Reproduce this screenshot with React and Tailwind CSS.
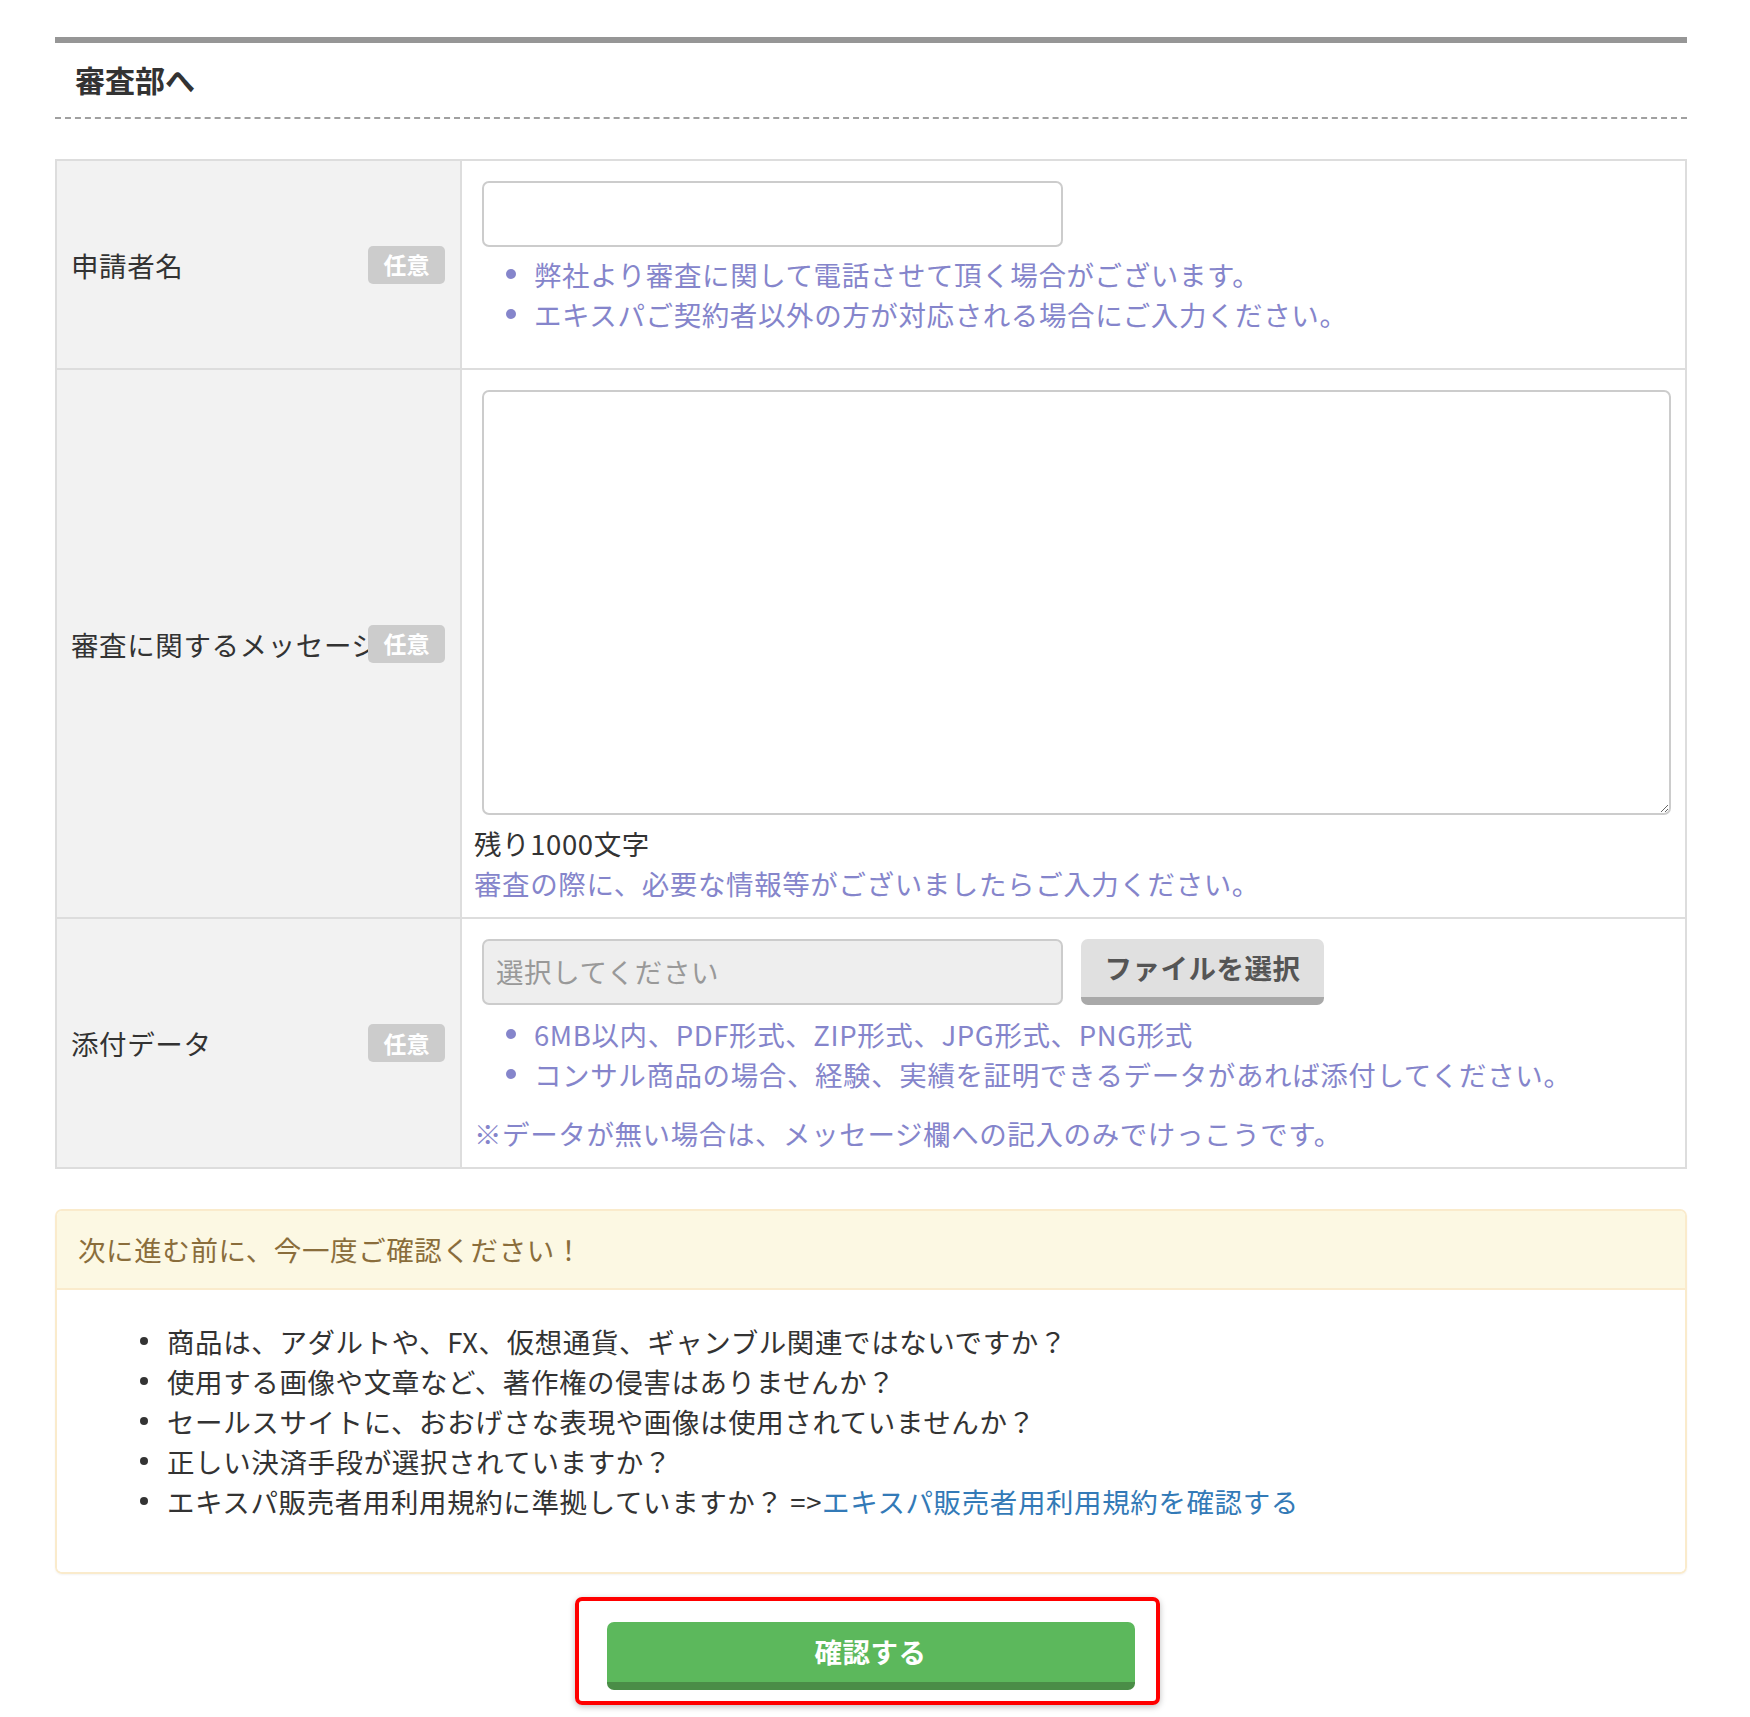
import React from 'react';

const font = "font-['Noto_Sans_CJK_JP','Noto_Sans',sans-serif]";

const Badge = () => (
  <span className="shrink-0 flex items-center justify-center w-[77px] h-[38px] rounded-[5px] bg-[#cccccc] text-white font-bold text-[23px] leading-none">
    任意
  </span>
);

const Label = ({ children }) => (
  <div className="w-[405px] shrink-0 bg-[#f2f2f2] border-r-2 border-[#dddddd] flex items-center pl-[14px] pr-[15px]">
    <span className="flex-1 min-w-0 overflow-hidden whitespace-nowrap text-[27.5px] tracking-[0.6px] leading-[40px] text-[#333333]">
      {children}
    </span>
    <Badge />
  </div>
);

// purple note bullets
const Notes = ({ items, className = '' }) => (
  <ul className={`pl-[32px] ${className}`}>
    {items.map((t) => (
      <li key={t} className="flex items-center gap-[18px] text-[27.5px] tracking-[0.6px] leading-[40px] text-[#8585cb] whitespace-nowrap">
        <span className="w-[10px] h-[10px] rounded-full bg-[#8585cb] shrink-0" />
        {t}
      </li>
    ))}
  </ul>
);

const checks = [
  '商品は、アダルトや、FX、仮想通貨、ギャンブル関連ではないですか？',
  '使用する画像や文章など、著作権の侵害はありませんか？',
  'セールスサイトに、おおげさな表現や画像は使用されていませんか？',
  '正しい決済手段が選択されていますか？',
];

export default function App() {
  return (
    <div className={`${font} bg-white min-h-[1717px] pt-[37px] pl-[55px]`}>
      <div className="w-[1632px]">
        {/* Section heading */}
        <div className="h-[6px] bg-[#969696]" />
        <div className="pl-[20px] pt-[16px] pb-[18px] border-b-2 border-dashed border-[#a0a0a0]">
          <h2 className="text-[30px] leading-[40px] font-bold text-[#333333]">審査部へ</h2>
        </div>

        {/* Form table */}
        <div className="mt-[40px] border-2 border-[#dddddd]">
          {/* Row 1 */}
          <div className="flex">
            <Label>申請者名</Label>
            <div className="flex-1 pl-[12px] pr-[14px] pt-[20px] pb-[14px]">
              <input
                type="text"
                className="ml-[8px] block w-[581px] h-[66px] border-2 border-[#cccccc] rounded-[7px] bg-white outline-none"
              />
              <Notes
                className="mt-[7px] mb-[20px]"
                items={[
                  '弊社より審査に関して電話させて頂く場合がございます。',
                  'エキスパご契約者以外の方が対応される場合にご入力ください。',
                ]}
              />
            </div>
          </div>

          {/* Row 2 */}
          <div className="flex border-t-2 border-[#dddddd]">
            <Label>審査に関するメッセージ</Label>
            <div className="flex-1 pl-[12px] pr-[14px] pt-[20px] pb-[14px]">
              <div className="pl-[8px]">
                <textarea className="block w-full h-[425px] border-2 border-[#cccccc] rounded-[7px] bg-white outline-none" />
              </div>
              <p className="mt-[8px] text-[27.5px] tracking-[0.6px] leading-[40px] text-[#333333]">残り1000文字</p>
              <p className="text-[27.5px] tracking-[0.6px] leading-[40px] text-[#8585cb]">
                審査の際に、必要な情報等がございましたらご入力ください。
              </p>
            </div>
          </div>

          {/* Row 3 */}
          <div className="flex border-t-2 border-[#dddddd]">
            <Label>添付データ</Label>
            <div className="flex-1 pl-[12px] pr-[14px] pt-[20px] pb-[14px]">
              <div className="ml-[8px] flex items-start gap-[18px]">
                <div className="w-[581px] h-[66px] border-2 border-[#cccccc] rounded-[7px] bg-[#eeeeee] flex items-center pl-[12px] text-[27.5px] tracking-[0.6px] text-[#999999]">
                  選択してください
                </div>
                <button className="w-[243px] h-[66px] rounded-[7px] bg-[#e0e0e0] border-b-8 border-[#a9a9a9] flex items-center justify-center text-[27.5px] tracking-[0.5px] font-bold text-[#555555]">
                  ファイルを選択
                </button>
              </div>
              <Notes
                className="mt-[9px]"
                items={[
                  '6MB以内、PDF形式、ZIP形式、JPG形式、PNG形式',
                  'コンサル商品の場合、経験、実績を証明できるデータがあれば添付してください。',
                ]}
              />
              <p className="mt-[19px] text-[27.5px] tracking-[0.6px] leading-[40px] text-[#8585cb]">
                ※データが無い場合は、メッセージ欄への記入のみでけっこうです。
              </p>
            </div>
          </div>
        </div>

        {/* Check panel */}
        <div className="mt-[40px] border-2 border-[#faebcc] rounded-[7px] overflow-hidden shadow-[0_1px_2px_rgba(0,0,0,0.05)]">
          <div className="bg-[#fcf8e3] border-b-2 border-[#faebcc] pl-[21px] pt-[18px] pb-[19px] text-[27.5px] tracking-[0.6px] leading-[40px] text-[#8a6d3b]">
            次に進む前に、今一度ご確認ください！
          </div>
          <ul className="bg-white pl-[83px] pt-[31px] pb-[51px] text-[27.5px] tracking-[0.6px] leading-[40px] text-[#333333]">
            {checks.map((t) => (
              <li key={t} className="flex items-center gap-[19px] whitespace-nowrap">
                <span className="w-[8px] h-[8px] rounded-full bg-[#333333] shrink-0" />
                {t}
              </li>
            ))}
            <li className="flex items-center gap-[19px] whitespace-nowrap">
              <span className="w-[8px] h-[8px] rounded-full bg-[#333333] shrink-0" />
              <span>
                エキスパ販売者用利用規約に準拠していますか？ =&gt;
                <a href="#" className="text-[#337ab7]">エキスパ販売者用利用規約を確認する</a>
              </span>
            </li>
          </ul>
        </div>

        {/* Submit */}
        <div className="mt-[23px] flex justify-center">
          <div className="ml-[-8px] border-4 border-[#ff0000] rounded-[7px] pl-[28px] pr-[21px] pt-[21px] pb-[11px] shadow-[0_2px_6px_rgba(0,0,0,0.25)]">
            <button className="w-[528px] h-[68px] rounded-[7px] bg-[#5cb85c] border-b-8 border-[#4a8d47] flex items-center justify-center text-[27.5px] tracking-[0.5px] font-bold text-white">
              確認する
            </button>
          </div>
        </div>
      </div>
    </div>
  );
}
